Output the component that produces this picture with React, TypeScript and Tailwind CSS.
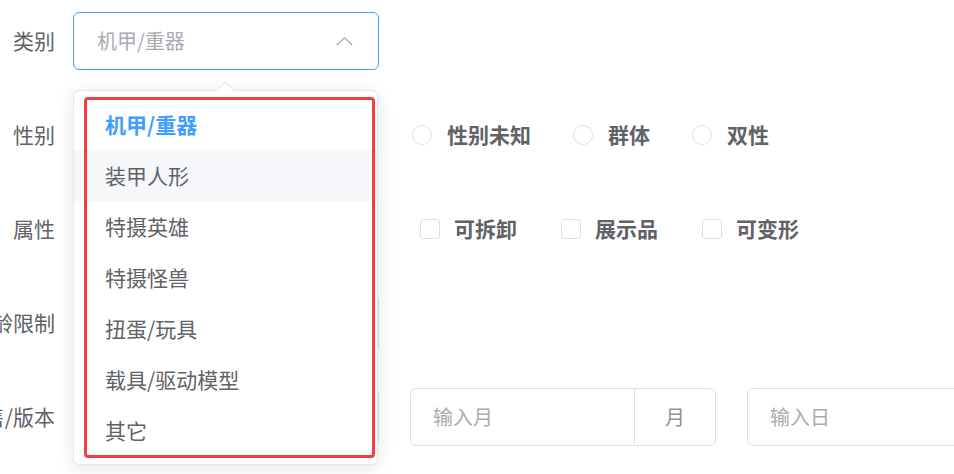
const font = { fontFamily: '"Noto Sans CJK SC", "Noto Sans", sans-serif' };

const categories = ['机甲/重器', '装甲人形', '特摄英雄', '特摄怪兽', '扭蛋/玩具', '载具/驱动模型', '其它'];

const Label = ({ text }: { text: string }) => (
  <div className="w-[55px] shrink-0 flex justify-end whitespace-nowrap text-[21px] text-[#606266]">
    {text}
  </div>
);

const Radio = ({ label }: { label: string }) => (
  <label className="flex items-center mr-[42px] whitespace-nowrap cursor-pointer">
    <span className="w-[20px] h-[20px] rounded-full border border-[#dcdfe6] bg-white shrink-0" />
    <span className="ml-[15px] text-[21px] font-semibold text-[#606266]">{label}</span>
  </label>
);

const Checkbox = ({ label }: { label: string }) => (
  <label className="flex items-center mr-[44px] whitespace-nowrap cursor-pointer">
    <span className="w-[20px] h-[20px] rounded-[3px] border border-[#dcdfe6] bg-white shrink-0" />
    <span className="ml-[14px] text-[21px] font-semibold text-[#606266]">{label}</span>
  </label>
);

const AppendInput = ({ placeholder, unit }: { placeholder?: string; unit?: string }) => (
  <div className="w-[306px] h-[58px] shrink-0 flex border border-[#dcdfe6] rounded-[6px] bg-white">
    <div className="flex-1 flex items-center px-[22px] text-[20px] text-[#a8abb2]">{placeholder}</div>
    <div className="w-[81px] flex items-center justify-center border-l border-[#dcdfe6] text-[20px] text-[#909399]">
      {unit}
    </div>
  </div>
);

export default function App() {
  return (
    <div className="relative w-full h-[474px] overflow-hidden bg-white" style={font}>
      <div className="flex flex-col gap-[36px] pt-[12px]">
        <div className="flex items-center h-[58px]">
          <Label text="类别" />
          <div className="ml-[18px] w-[306px] h-[58px] flex items-center justify-between pl-[23px] pr-[25px] border border-[#409eff] rounded-[6px]">
            <span className="text-[20px] text-[#a8abb2]">机甲/重器</span>
            <svg width="17" height="9" viewBox="0 0 17 9" fill="none">
              <polyline points="0.8,8 8.5,0.8 16.2,8" stroke="#a8abb2" strokeWidth="1.3" />
            </svg>
          </div>
        </div>

        <div className="flex items-center h-[58px]">
          <Label text="性别" />
          <div className="ml-[18px] flex items-center">
            {/* options under the dropdown */}
            <div className="w-[339px] shrink-0" />
            <Radio label="性别未知" />
            <Radio label="群体" />
            <Radio label="双性" />
          </div>
        </div>

        <div className="flex items-center h-[58px]">
          <Label text="属性" />
          <div className="ml-[18px] flex items-center">
            <div className="w-[347px] shrink-0" />
            <Checkbox label="可拆卸" />
            <Checkbox label="展示品" />
            <Checkbox label="可变形" />
          </div>
        </div>

        <div className="flex items-center h-[58px]">
          <Label text="年龄限制" />
          <div className="ml-[18px] w-[306px] h-[58px] border border-[#dcdfe6] rounded-[6px]" />
        </div>

        <div className="flex items-center h-[58px]">
          <Label text="发售/版本" />
          <div className="ml-[18px] flex gap-[31px]">
            <AppendInput />
            <AppendInput placeholder="输入月" unit="月" />
            <AppendInput placeholder="输入日" unit="日" />
          </div>
        </div>
      </div>

      {/* dropdown popper */}
      <div className="absolute left-[73px] top-[90px] w-[305px] bg-white border border-[#e4e7ed] rounded-[6px] shadow-[0_3px_18px_rgba(0,0,0,0.1)]">
        <div className="absolute -top-[7px] left-[145px] w-[13px] h-[13px] rotate-45 bg-white border-t border-l border-[#e4e7ed]" />
        <ul className="relative py-[8px]">
          {categories.map((c, i) => (
            <li
              key={c}
              className={
                'h-[51px] flex items-center px-[31px] text-[21px] ' +
                (i === 0
                  ? 'text-[#409eff] font-bold'
                  : i === 1
                  ? 'text-[#606266] bg-[#f5f7fa]'
                  : 'text-[#606266]')
              }
            >
              {c}
            </li>
          ))}
        </ul>
      </div>

      {/* annotation frame */}
      <div className="absolute left-[84px] top-[97px] w-[291px] h-[361px] border-[3px] border-[#f43f3f] rounded-[4px] pointer-events-none" />
    </div>
  );
}
